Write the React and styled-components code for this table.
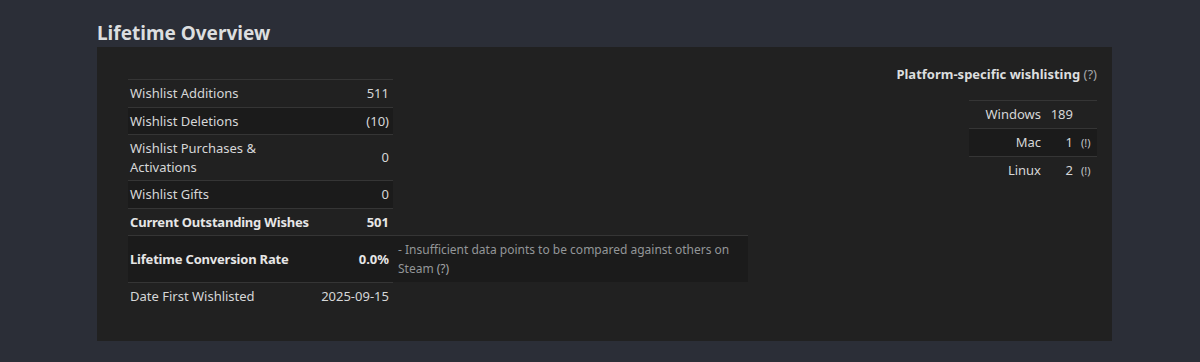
import React from 'react';
import styled, { createGlobalStyle } from 'styled-components';

const GlobalStyle = createGlobalStyle`
  body {
    margin: 0;
    background: #2b2e37;
    font-family: "Noto Sans", "Liberation Sans", Arial, sans-serif;
  }
`;

const stats = [
  { label: 'Wishlist Additions', value: '511' },
  { label: 'Wishlist Deletions', value: '(10)' },
  { label: 'Wishlist Purchases & Activations', value: '0' },
  { label: 'Wishlist Gifts', value: '0' },
  { label: 'Current Outstanding Wishes', value: '501', bold: true },
  {
    label: 'Lifetime Conversion Rate',
    value: '0.0%',
    bold: true,
    note: '- Insufficient data points to be compared against others on Steam',
  },
  { label: 'Date First Wishlisted', value: '2025-09-15' },
];

const platforms = [
  { name: 'Windows', count: '189' },
  { name: 'Mac', count: '1', flag: true },
  { name: 'Linux', count: '2', flag: true },
];

export default function App() {
  return (
    <Page>
      <GlobalStyle />
      <Title>Lifetime Overview</Title>
      <Card>
        <StatsTable>
          <colgroup>
            <col style={{ width: 189 }} />
            <col style={{ width: 76 }} />
            <col style={{ width: 355 }} />
          </colgroup>
          <tbody>
            {stats.map((s) => (
              <Row key={s.label}>
                <Label $bold={s.bold}>{s.label}</Label>
                <Value $bold={s.bold}>{s.value}</Value>
                {s.note ? (
                  <Note>
                    {s.note} <Hint>(?)</Hint>
                  </Note>
                ) : (
                  <Empty />
                )}
              </Row>
            ))}
          </tbody>
        </StatsTable>

        <PlatformBox>
          <PlatformHeading>
            Platform-specific wishlisting <Hint>(?)</Hint>
          </PlatformHeading>
          <PlatformTable>
            <tbody>
              {platforms.map((p) => (
                <Row key={p.name}>
                  <PlatformName>{p.name}</PlatformName>
                  <PlatformCount>{p.count}</PlatformCount>
                  <Flag>{p.flag ? '(!)' : ''}</Flag>
                </Row>
              ))}
            </tbody>
          </PlatformTable>
        </PlatformBox>
      </Card>
    </Page>
  );
}

const Page = styled.div`
  padding: 21px 88px 23px 97px;
  color: #d6d7d8;
`;

const Title = styled.h2`
  margin: 0 0 2px;
  font-size: 19px;
  line-height: 24px;
  font-weight: 700;
  color: #dcdedf;
`;

const Card = styled.div`
  display: flex;
  justify-content: space-between;
  align-items: flex-start;
  background: #212121;
  padding: 18px 15px 32px 31px;
`;

const StatsTable = styled.table`
  margin-top: 14px;
  border-collapse: collapse;
  table-layout: fixed;
  width: 620px;
  font-size: 13px;
  line-height: 18.5px;
`;

const Row = styled.tr`
  &:nth-child(even) td {
    background: #1b1b1b;
  }
  &:nth-child(even) td:empty {
    background: transparent;
  }
`;

const Cell = styled.td`
  padding: 4px;
  border-top: 1px solid #353535;
  vertical-align: middle;
  font-weight: ${(p) => (p.$bold ? 700 : 400)};
  color: ${(p) => (p.$bold ? '#e6e6e6' : '#d6d7d8')};
`;

const Label = styled(Cell)`
  padding-left: 2px;
  letter-spacing: ${(p) => (p.$bold ? '-0.2px' : '0')};
`;

const Value = styled(Cell)`
  padding-left: 0;
  text-align: right;
  white-space: nowrap;
`;

const Note = styled(Cell)`
  padding-left: 5px;
  font-size: 12px;
  line-height: 19px;
  color: #939698;
`;

const Empty = styled.td`
  padding: 0;
`;

const Hint = styled.span`
  color: #a4a6a8;
  font-weight: 400;
`;

const PlatformBox = styled.div`
  display: flex;
  flex-direction: column;
  align-items: flex-end;
`;

const PlatformHeading = styled.div`
  font-size: 13px;
  line-height: 18px;
  font-weight: 700;
  color: #dcdedf;
`;

const PlatformTable = styled.table`
  margin-top: 17px;
  border-collapse: collapse;
  font-size: 13px;
  line-height: 19px;
  width: 128px;

  td {
    border-top: 1px solid #353535;
    padding: 4px 0;
  }
`;

const PlatformName = styled.td`
  text-align: right;
  width: 72px;
  && {
    padding-right: 1px;
  }
`;

const PlatformCount = styled.td`
  text-align: right;
  width: 31px;
  && {
    padding-right: 6px;
  }
`;

const Flag = styled.td`
  text-align: left;
  font-size: 11px;
  color: #c4c6c8;
  && {
    padding-left: 2px;
  }
`;
